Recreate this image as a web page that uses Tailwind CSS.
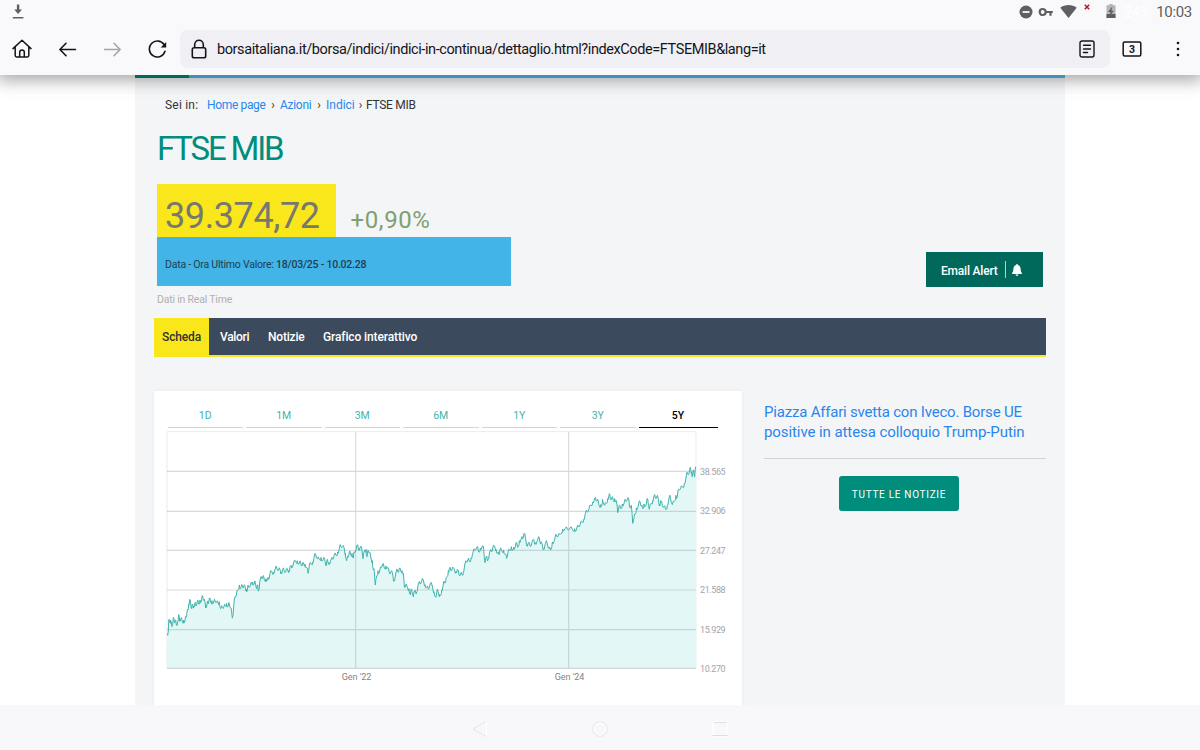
<!DOCTYPE html>
<html lang="it">
<head>
  <meta charset="UTF-8" />
  <meta name="viewport" content="width=device-width, initial-scale=1.0" />
  <title>FTSE MIB - Borsa Italiana</title>
  <script src="https://cdn.jsdelivr.net/npm/@tailwindcss/browser@4"></script>
</head>
<body class="w-[1200px] h-[750px] overflow-hidden flex flex-col bg-white font-[Roboto,sans-serif] whitespace-nowrap">

  <!-- Browser chrome -->
  <header class="relative z-10 h-[75px] shrink-0 bg-[#f9f9fb] shadow-[0_2px_16px_3px_rgba(0,0,0,0.36)]">
    <!-- Status bar -->
    <div class="h-6 flex items-center justify-between pl-3 pr-2 text-[#5f5f62]">
      <svg class="w-3 h-4" viewBox="0 0 12 16" fill="currentColor"><path d="M4.9 0.5h2.4v5H10L6.1 10 2.2 5.500h2.700zM.8 13h10.600v1.500H.8z"/></svg>
      <div class="flex items-center">
        <svg class="w-[14px] h-[14px] mr-[5px]" viewBox="0 0 14 14"><circle cx="7" cy="7" r="6.500" fill="currentColor"/><path d="M3.500 7h7" stroke="#f9f9fb" stroke-width="1.800"/></svg>
        <svg class="w-4 h-[10px] mr-[6px]" viewBox="0 0 16 10" fill="none" stroke="currentColor" stroke-width="2.200"><circle cx="4.700" cy="5" r="3"/><path d="M7.500 5h7.300M12.500 5v3.800"/></svg>
        <svg class="w-[17px] h-[13px] mr-[7px] -mt-[2px]" viewBox="0 0 17 13" fill="currentColor"><path d="M8.500 13 .3 2.800C4.500-.8 12.500-.8 16.700 2.800z"/></svg>
        <svg class="w-[6px] h-[6px] mr-[16px] -mt-[10px]" viewBox="0 0 6 6" stroke="#b4182d" stroke-width="1.500"><path d="M.8.8l4.400 4.400M5.200.8.8 5.200"/></svg>
        <svg class="w-[10px] h-[14px] mr-[8px] -mt-[2px]" viewBox="0 0 10 14"><path d="M3.300 0h3.400v1.300H9.500V14H.5V1.300h2.800z" fill="#b5b5b7"/><path d="M.5 10h9v4h-9z" fill="#5f5f62"/><path d="M6.300 2.500 2 8h2.500l-1 4L8 6.700H5.500z" fill="#5f5f62"/></svg>
        <span class="w-[27px] mr-[5px] text-[14px] leading-6 text-white">24%</span>
        <span class="text-[15px] leading-6 tracking-[-0.300px]">10:03</span>
      </div>
    </div>
    <!-- Toolbar -->
    <div class="h-[50px] flex items-center text-[#15141a]">
      <svg class="w-5 h-5 ml-[12px]" viewBox="0 0 20 20" fill="none" stroke="currentColor" stroke-width="1.500" stroke-linejoin="round" stroke-linecap="round"><path d="M1 9.600 10 1.300l9 8.300M3.200 8v8.600a1.400 1.400 0 0 0 1.400 1.400h10.800a1.400 1.400 0 0 0 1.400-1.400V8M7.700 17.800v-4.500a2.300 2.300 0 0 1 4.600 0v4.500"/></svg>
      <svg class="w-[18px] h-4 ml-[27px]" viewBox="0 0 18 16" fill="none" stroke="currentColor" stroke-width="1.600" stroke-linecap="round" stroke-linejoin="round"><path d="M16.500 8.500H1M7 2.300.9 8.500 7 14.700"/></svg>
      <svg class="w-[18px] h-4 ml-[27px] text-[#a5a5a9]" viewBox="0 0 18 16" fill="none" stroke="currentColor" stroke-width="1.600" stroke-linecap="round" stroke-linejoin="round"><path d="M.5 8.500H16M10 2.300l6.100 6.200-6.100 6.200"/></svg>
      <svg class="w-5 h-[18px] ml-[26px]" viewBox="0 0 20 18" fill="none" stroke="currentColor" stroke-width="1.600" stroke-linecap="round"><path d="M17 11.300A8 8 0 1 1 16 4.500"/><path d="M18.200 2v5.500h-5.500z" fill="currentColor" stroke="none"/></svg>
      <div class="w-[930px] h-[38px] ml-[12px] pl-[11px] pr-[15px] rounded-[8px] bg-[#f0f0f4] flex items-center">
        <svg class="w-4 h-5" viewBox="0 0 16 20" fill="none" stroke="currentColor" stroke-width="1.600"><rect x="1.300" y="8.800" width="13.400" height="9.900" rx="1.800"/><path d="M3.700 8.800V5.500a4.300 4.300 0 0 1 8.600 0v3.300"/></svg>
        <span class="ml-[10px] pt-px text-[14.500px] tracking-[-0.410px]">borsaitaliana.it/borsa/indici/indici-in-continua/dettaglio.html?indexCode=FTSEMIB&amp;lang=it</span>
        <svg class="w-4 h-[18px] ml-auto" viewBox="0 0 16 18" fill="none" stroke="currentColor" stroke-width="1.400" stroke-linecap="round"><rect x="1" y="1" width="14" height="16" rx="2"/><path d="M4.500 5.300h7M4.500 9h7M4.500 12.500h4"/></svg>
      </div>
      <svg class="w-5 h-4 ml-[12px]" viewBox="0 0 20 16"><rect x="1.200" y="1" width="17.600" height="14" rx="1.500" fill="none" stroke="currentColor" stroke-width="1.500"/><text x="10" y="11.700" text-anchor="middle" font-size="10.500" font-weight="700" fill="currentColor">3</text></svg>
      <svg class="w-1 h-4 ml-[34px]" viewBox="0 0 4 16" fill="currentColor"><circle cx="2" cy="2" r="1.300"/><circle cx="2" cy="8" r="1.300"/><circle cx="2" cy="14" r="1.300"/></svg>
    </div>
  </header>

  <!-- Page -->
  <main class="h-[630px] shrink-0 w-[930px] ml-[135px] bg-[#f4f5f7] overflow-hidden">
    <nav class="h-5 mt-5 pl-[30px] flex items-center text-[12px] text-[#333] leading-5">
      <span class="w-[42px] tracking-[0.200px]">Sei in:</span>
      <a class="w-[59px] tracking-[-0.350px] text-[#2a86ec]">Home page</a>
      <span class="w-[14px] text-center">›</span>
      <a class="w-[32px] tracking-[-0.300px] text-[#2a86ec]">Azioni</a>
      <span class="w-[14px] text-center">›</span>
      <a class="w-[29px] text-[#2a86ec]">Indici</a>
      <span class="w-[11px] text-center">›</span>
      <span class="tracking-[-0.300px]">FTSE MIB</span>
    </nav>
    <h1 class="h-[46px] mt-[11px] ml-[22px] text-[33px] leading-[46px] tracking-[-2.200px] text-[#008d7c]">FTSE MIB</h1>

    <div class="ml-[22px] mt-[12px] flex items-start justify-between">
      <div>
        <div class="flex">
          <div class="w-[178.500px] h-[53px] pl-2 pt-[6px] bg-[#f9e71c] text-[36px] leading-[52px] tracking-[-0.400px] text-[#77786f]">39.374,72</div>
          <div class="ml-[15px] pt-[10px] text-[24px] leading-[52px] tracking-[0.600px] text-[#7fa06d]">+0,90%</div>
        </div>
        <div class="w-[354px] h-[48.500px] -mt-[9px] pl-2 bg-[#43b4e7] text-[10.500px] leading-[56px] tracking-[-0.220px] text-[#1d4050]">Data - Ora Ultimo Valore: <span class="font-medium">18/03/25 - 10.02.28</span></div>
        <div class="mt-[5.500px] h-[17px] text-[10.500px] leading-[17px] tracking-[-0.200px] text-[#afb1b4]">Dati in Real Time</div>
      </div>
      <button class="w-[117px] h-[35px] mt-[68px] mr-[22px] pl-[15px] bg-[#00695c] flex items-center text-[12px] text-white">
        <span class="w-[64px] pt-[2px] text-left font-medium tracking-[-0.200px]">Email Alert</span>
        <span class="w-px h-[17px] bg-white/70"></span>
        <svg class="w-[10px] h-3 mt-px ml-[6px]" viewBox="0 0 10 12" fill="currentColor"><path d="M5 0c.6 0 .9.300.9.900 1.700.500 2.600 1.900 2.700 3.600.1 2.600.4 3.500 1.300 4.300.3.500 0 1.100-.6 1.100H.7c-.6 0-.9-.6-.6-1.100.9-.8 1.200-1.700 1.300-4.300.1-1.700 1-3.100 2.700-3.600C4.100.3 4.400 0 5 0zM3.600 10.500h2.800a1.400 1.400 0 0 1-2.800 0z"/></svg>
      </button>
    </div>

    <div class="h-[39px] mt-[10px] ml-[19px] mr-[19px] bg-[#3c4a5d] border-b-2 border-[#f4e72d] flex text-[12px] font-medium text-white leading-[39px] tracking-[-0.120px]">
      <a class="w-[55px] h-[39px] bg-[#f9e71c] text-center tracking-[-0.150px] text-[#333]">Scheda</a>
      <a class="ml-[11px] w-[48px] tracking-[-0.300px]">Valori</a>
      <a class="w-[55px] tracking-[-0.200px]">Notizie</a>
      <a>Grafico interattivo</a>
    </div>

    <div class="mt-[34px] ml-[19px] mr-[19px] flex">
      <!-- Chart card -->
      <section class="w-[588px] h-[316px] pt-[15px] pl-[12px] bg-white shadow-[0_0_4px_rgba(0,0,0,0.05)]">
        <div class="h-[22px] pl-[1.500px] flex gap-[3px] text-[10.500px] leading-[20px] text-center text-[#42b3aa] *:border-b *:border-[#cfd5df]">
          <a class="w-[75.500px]">1D</a>
          <a class="w-[75.500px]">1M</a>
          <a class="w-[75.500px]">3M</a>
          <a class="w-[75.500px]">6M</a>
          <a class="w-[75.500px]">1Y</a>
          <a class="w-[75.500px]">3Y</a>
          <a class="w-[79px] font-medium text-black !border-black">5Y</a>
        </div>
        <!-- drawn in thirds of a pixel -->
        <svg class="w-[575px] h-[260px] mt-[2px]" viewBox="0 0 1725 780">
          <path id="area" fill="#e3f8f6"/>
          <path d="M3 715V5H1590V715" fill="none" stroke="#e9ebef" stroke-width="3"/>
          <path d="M3 124H1590M3 244H1590M3 361H1590M3 480H1590M3 599H1590M3 715H1590M569 5V715M1208 5V715" fill="none" stroke="#788496" stroke-opacity=".3" stroke-width="3.500"/>
          <polyline id="line" fill="none" stroke="#42b3ac" stroke-width="3" stroke-linejoin="round"/>
          <g font-family="Roboto, sans-serif" font-size="27" fill="#a2a4a8">
            <text x="1602" y="134" textLength="77">38.565</text>
            <text x="1602" y="253" textLength="77">32.906</text>
            <text x="1602" y="371" textLength="77">27.247</text>
            <text x="1602" y="489" textLength="77">21.588</text>
            <text x="1602" y="609" textLength="77">15.929</text>
            <text x="1602" y="726" textLength="77">10.270</text>
            <text x="527" y="749" textLength="89" fill="#808287">Gen '22</text>
            <text x="1166" y="749" textLength="89" fill="#808287">Gen '24</text>
          </g>
        </svg>
      </section>

      <!-- News -->
      <aside class="ml-[22px] w-[282px]">
        <p class="pt-[11px] pb-[16px] border-b border-[#cfd3da] text-[15px] leading-5 tracking-[-0.080px] text-[#2a86ec]"><span class="tracking-[-0.200px]">Piazza Affari svetta con Iveco. Borse UE</span><br />positive in attesa colloquio Trump-Putin</p>
        <button class="block w-[120px] h-[35px] mt-[17px] ml-[75px] pt-px rounded-[3px] bg-[#008d7c] text-[10px] tracking-[0.700px] text-white">TUTTE LE NOTIZIE</button>
      </aside>
    </div>
  </main>

  <!-- Site header edge, just below the toolbar -->
  <div class="absolute z-20 top-[75px] left-[135px] w-[930px] h-[3px] bg-[#3e91b8] flex"><span class="w-[54px] bg-[#00695c]"></span></div>

  <!-- Android navigation bar -->
  <footer class="relative h-[45px] bg-[#f8f8fa] flex items-center justify-center gap-[104px]">
    <svg class="w-4 h-4 mt-[3px]" viewBox="0 0 16 16" fill="none" stroke="#e3e3e5"><path d="M14.500.8v14.500L1 8z" stroke="#fff"/><path d="M13.500.8 1 8l13.500 7.500"/></svg>
    <svg class="w-4 h-4 mt-[3px]" viewBox="0 0 16 16" fill="none" stroke="#e5e5e7"><circle cx="8" cy="8" r="7.300"/><circle cx="8" cy="8" r="6" stroke="#fff"/></svg>
    <svg class="w-4 h-4 mt-[3px]" viewBox="0 0 16 16" fill="none" stroke="#fff"><rect x="1" y="1" width="14" height="14"/><path d="M2 1.500h13M0 14.500h16" stroke="#e0e0e2"/></svg>
  </footer>

  <script>
    // index history, split in three periods, each with its own origin
    const periods = [
      { x: -48, y: 300, points: "52,312 55,303 57,268 61,280 63,272 67,286 70,262 73,278 76,270 79,285 83,275 86,254 89,274 93,264 97,276 101,270 104,276 108,262 111,247 114,240 116,222 119,208 122,222 125,236 128,222 131,228 135,218 138,228 142,213 146,222 150,210 154,214 158,198 162,212 165,216 168,230 172,215 174,222 178,205 182,216 186,212 190,220 195,212 200,216 205,222 208,215 212,236 217,233 222,230 226,226 230,220 234,230 238,222 242,234 245,248 248,260 251,230 255,200 259,195 263,180 268,165 272,175 277,168 281,172 285,168 289,178 292,180 295,168 300,170 305,157 308,156 312,163 316,158 320,176 323,165 326,180 330,150 335,145 339,138 343,150 348,146 352,150 356,148 360,130 365,124 370,126 375,118 380,114 386,120 390,118 394,126 398,118 402,122 407,126 412,116 417,122 420,110 425,114 430,102 436,92 442,92 447,102 452,98 456,108 460,98 465,102 470,112 474,130 478,106 483,100 488,96 492,82 497,74 502,86 508,88 513,82 518,92 524,88 529,108 532,88 537,98 542,92 548,88 553,74 558,76 563,66 568,56 572,48 578,50 583,56 586,70 590,92 594,82 598,66 602,74 606,70 610,84 613,66 618,60 623,44 627,56 631,50 636,60 639,86 644,60 648,58 651,80 655,62 659,68 663,84 667,92 670,120 673,125 676,165 680,138 684,122 688,128 693,112 698,102 703,114 708,108 713,112 718,130 723,125 728,132 732,152 737,132 742,120 746,126 750,114 756,122 760,130 763,172 767,165 772,172 777,176 781,194 785,178 790,200 795,180 800,185 805,160 810,162 815,152 820,150 825,164 830,172 835,178 841,160 847,168 852,185 858,202 863,178 868,200" },
      { x: 822, y: 300, points: "0,198 5,180 9,168 13,156 17,155 21,140 25,122 28,116 32,120 36,118 42,116 48,124 52,118 57,135 62,132 66,134 70,125 74,105 79,96 84,88 88,94 93,84 98,70 104,60 111,50 116,66 121,54 127,48 131,58 135,98 140,78 144,88 149,65 154,66 158,54 164,48 168,58 174,70 177,74 180,58 185,62 191,60 195,72 200,85 204,66 209,60 214,50 219,60 223,58 228,38 233,52 238,32 243,28 248,26 252,10 257,26 261,44 265,38 270,48 275,42 281,28 286,38 292,32 298,24 302,42 306,40 311,56 316,40 321,38 327,56 332,60 337,36 343,32 349,14 354,20 361,12" },
      { x: 822, y: -150, points: "368,447 375,446 382,448 390,444 398,450 404,446 409,450 415,438 420,436 425,424 431,418 436,400 441,396 447,386 452,376 458,366 464,354 468,362 472,358 477,376 482,374 487,370 488,362 494,376 499,370 503,356 508,341 511,358 516,352 520,362 524,356 529,362 533,398 537,378 542,386 547,372 552,370 557,362 562,358 567,360 569,378 574,376 578,430 582,412 586,402 589,384 594,380 600,364 604,378 608,386 612,372 618,376 623,356 628,388 633,370 638,362 642,346 646,354 651,348 655,358 659,374 662,362 667,376 672,380 677,388 682,375 687,354 691,352 697,374 703,364 708,346 711,354 716,328 722,324 728,322 733,310 738,294 742,278 747,282 751,262 755,276 757,290 761,270 764,290 767,260" }
    ];

    const closes = periods.flatMap(p => p.points.split(" ").map(pair => {
      const [x, y] = pair.split(",").map(Number);
      return [x + p.x, y + p.y];
    }));

    // small daily swings between two closes
    const swings = [[0.35, 7], [0.65, -7], [0.5, 4], [0.4, -6], [0.7, 8]];
    const points = closes.flatMap((p, i) => {
      const next = closes[i + 1];
      if (!next) return [p];
      const [t, dy] = swings[i % swings.length];
      return [p, [p[0] + (next[0] - p[0]) * t, p[1] + (next[1] - p[1]) * t + dy]];
    });

    document.getElementById("line").setAttribute("points", points.join(" "));
    document.getElementById("area").setAttribute("d", "M3 715L" + points.join("L") + "V715Z");
  </script>
</body>
</html>
